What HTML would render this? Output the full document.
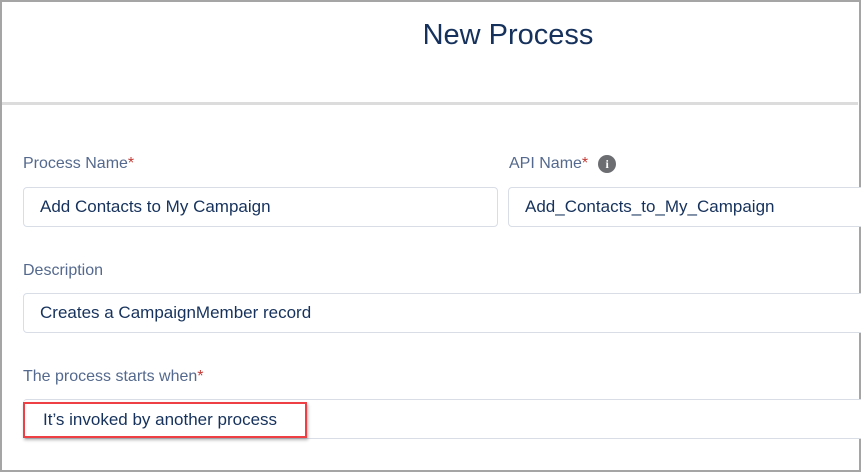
<!DOCTYPE html>
<html><head><style>
body{margin:0;width:861px;height:472px;overflow:hidden;background:#fff;font-family:"Liberation Sans",sans-serif;position:relative}
.frame{position:absolute;left:0;top:0;width:857px;height:468px;border:2px solid #a5a5a5}
.title{position:absolute;left:0;width:1016px;top:19px;text-align:center;font-size:29px;color:#16325c}
.hr{position:absolute;left:2px;right:3px;top:102px;height:3px;background:#dcdcdc}
.lbl{position:absolute;font-size:16px;color:#54698d}
.lbl b{color:#c23934;font-weight:normal}
.inp{position:absolute;border:1px solid #d8dde6;border-radius:4px;box-sizing:border-box;font-size:17px;color:#16325c;line-height:38px;padding-left:16px;background:#fff}
.info{display:inline-block;width:18px;height:18px;border-radius:50%;background:#6b6d70;color:#fff;font-size:12px;font-weight:bold;text-align:center;line-height:18px;vertical-align:middle;margin-left:10px;font-family:"Liberation Serif",serif}
</style></head><body>
<div class="frame"></div>
<div class="title">New Process</div>
<div class="hr"></div>
<div class="lbl" style="left:23px;top:155px">Process Name<b>*</b></div>
<div class="lbl" style="left:509px;top:155px">API Name<b>*</b><span class="info">i</span></div>
<div class="inp" style="left:23px;top:187px;width:475px;height:40px">Add Contacts to My Campaign</div>
<div class="inp" style="left:508px;top:187px;width:360px;height:40px">Add_Contacts_to_My_Campaign</div>
<div class="lbl" style="left:23px;top:262px">Description</div>
<div class="inp" style="left:23px;top:293px;width:845px;height:40px">Creates a CampaignMember record</div>
<div class="lbl" style="left:23px;top:368px">The process starts when<b>*</b></div>
<div class="inp" style="left:23px;top:399px;width:845px;height:40px;border-left:none"></div>
<div style="position:absolute;left:23px;top:402px;height:32px;border:2px solid #ee3f45;box-shadow:1px 2px 3px rgba(0,0,0,.3);font-size:17px;color:#16325c;line-height:32px;padding-left:18px;width:262px">It’s invoked by another process</div>
</body></html>
